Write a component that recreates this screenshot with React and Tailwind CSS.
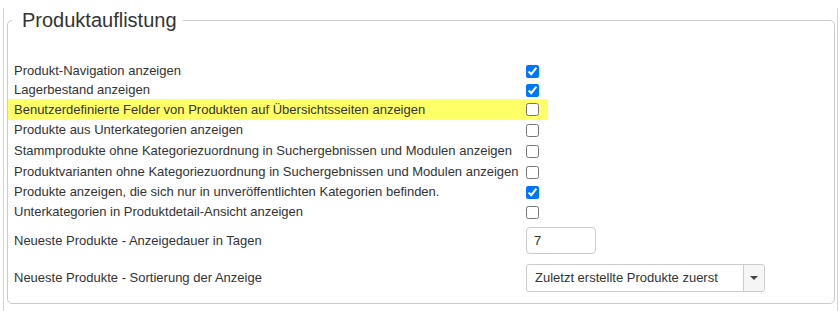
import { useState } from "react";

const optionen = [
  { label: "Produkt-Navigation anzeigen", checked: true, h: "h-5" },
  { label: "Lagerbestand anzeigen", checked: true, h: "h-[18px]" },
  { label: "Benutzerdefinierte Felder von Produkten auf Übersichtsseiten anzeigen", checked: false, highlight: true, h: "h-[21px]" },
  { label: "Produkte aus Unterkategorien anzeigen", checked: false, h: "h-5" },
  { label: "Stammprodukte ohne Kategoriezuordnung in Suchergebnissen und Modulen anzeigen", checked: false, h: "h-[22px]" },
  { label: "Produktvarianten ohne Kategoriezuordnung in Suchergebnissen und Modulen anzeigen", checked: false, h: "h-5" },
  { label: "Produkte anzeigen, die sich nur in unveröffentlichten Kategorien befinden.", checked: true, h: "h-5" },
  { label: "Unterkategorien in Produktdetail-Ansicht anzeigen", checked: false, h: "h-5" },
];

const OptionRow = ({ label, checked, highlight, h }) => {
  const [value, setValue] = useState(checked);
  return (
    <div className={`flex items-center w-[540px] ${h} ${highlight ? "bg-[#ffff66]" : ""}`}>
      <label className="w-[518px] pl-[6px] whitespace-nowrap">{label}</label>
      <input
        type="checkbox"
        className="m-0 w-[13px] h-[13px]"
        checked={value}
        onChange={() => setValue((prev) => !prev)}
      />
    </div>
  );
};

const App = () => {
  return (
    <div className="w-[840px] h-[311px] bg-white overflow-hidden font-['Liberation_Sans',Arial,sans-serif] text-[13px] text-[#333]">
      <div className="ml-[3px] w-[835px] h-[311px] border-l border-r border-[#d4d4d4]">
        {/* Fieldset */}
        <fieldset className="mt-[8px] ml-[3px] mr-[2px] border border-[#cccccc] rounded-[5px] pb-[11px]">
          <legend className="ml-[4px] pl-[10px] pr-[6px] text-[20px] leading-[24px] text-[#333]">
            Produktauflistung
          </legend>

          <div className="pt-[29px]">
            {optionen.map((o) => (
              <OptionRow key={o.label} {...o} />
            ))}
          </div>

          {/* Anzeigedauer */}
          <div className="flex items-center mt-[5px] h-[27px]">
            <label className="w-[518px] pl-[6px]">Neueste Produkte - Anzeigedauer in Tagen</label>
            <input
              type="text"
              defaultValue="7"
              className="w-[70px] h-[27px] border border-[#cccccc] rounded-[4px] px-[7px] text-[13px] text-[#333] outline-none"
            />
          </div>

          {/* Sortierung */}
          <div className="flex items-center mt-[10px] h-[28px]">
            <label className="w-[518px] pl-[6px]">Neueste Produkte - Sortierung der Anzeige</label>
            <div className="flex w-[239px] h-[28px] border border-[#cccccc] rounded-[3px] overflow-hidden">
              <div className="flex-1 flex items-center pl-[8px] text-[13px] text-[#333]">
                Zuletzt erstellte Produkte zuerst
              </div>
              <div className="w-[21px] flex items-center justify-center bg-[#f5f5f5] border-l border-[#cccccc]">
                <span className="block w-0 h-0 border-l-[4px] border-r-[4px] border-t-[4px] border-l-transparent border-r-transparent border-t-[#444]" />
              </div>
            </div>
          </div>
        </fieldset>
      </div>
    </div>
  );
};

export default App;
